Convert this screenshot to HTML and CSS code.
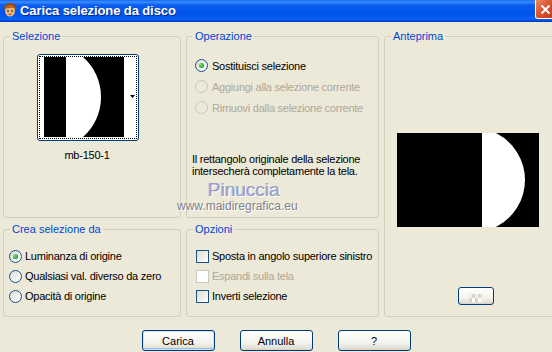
FILE: index.html
```html
<!DOCTYPE html>
<html lang="it">
<head>
  <meta charset="UTF-8">
  <meta name="viewport" content="width=device-width, initial-scale=1.0">
  <title>Carica selezione da disco</title>
  <link rel="stylesheet" href="styles.css">
</head>
<body>

  <div class="window">

    <!-- Title bar -->
    <div class="titlebar">
      <svg class="app-icon" width="16" height="16" viewBox="0 0 16 16">
        <path d="M2 6 Q3 1 8 1 Q13 1 14 6 L13 8 L3 8 Z" fill="#9A4A12"/>
        <ellipse cx="8" cy="9" rx="5" ry="5.5" fill="#F2B27A"/>
        <path d="M3 7 Q5 3 9 4 Q12 4 13 7 Q11 5 8 6 Q5 6 3 7 Z" fill="#C0601C"/>
        <circle cx="6" cy="9" r="1" fill="#2A6A2A"/>
        <circle cx="10" cy="9" r="1" fill="#2A6A2A"/>
        <path d="M6.5 12 Q8 13 9.5 12" stroke="#B0402A" stroke-width="1" fill="none"/>
      </svg>
      <span class="title">Carica selezione da disco</span>
      <span class="close-btn">
        <svg width="11" height="11" viewBox="0 0 11 11">
          <path d="M1.5 1.5 L9.5 9.5 M9.5 1.5 L1.5 9.5" stroke="#fff" stroke-width="2"/>
        </svg>
      </span>
    </div>

    <div class="dialog">
      <div class="groups">

        <!-- Selezione -->
        <fieldset class="group">
          <legend>Selezione</legend>
          <div class="thumb-wrap">
            <div class="thumb">
              <div class="thumb-focus">
                <svg width="80" height="80" viewBox="0 0 80 80">
                  <rect width="80" height="80" fill="#000"/>
                  <path d="M22 0 H39 A53.4 53.4 0 0 1 39 80 H22 Z" fill="#fff"/>
                </svg>
                <span class="thumb-side">
                  <svg width="5" height="3" viewBox="0 0 5 3"><path d="M0 0 H5 L2.5 3 Z" fill="#000"/></svg>
                </span>
              </div>
            </div>
            <div class="thumb-name">mb-150-1</div>
          </div>
        </fieldset>

        <!-- Operazione -->
        <fieldset class="group">
          <legend>Operazione</legend>
          <div class="option-list op-list">
            <label class="option"><span class="radio checked"></span>Sostituisci selezione</label>
            <label class="option disabled"><span class="radio"></span>Aggiungi alla selezione corrente</label>
            <label class="option disabled"><span class="radio"></span>Rimuovi dalla selezione corrente</label>
          </div>
          <p class="note">Il rettangolo originale della selezione<br>intersecherà completamente la tela.</p>
        </fieldset>

        <!-- Anteprima -->
        <fieldset class="group preview-group">
          <legend>Anteprima</legend>
          <svg class="preview" width="142" height="94" viewBox="0 0 142 94">
            <rect width="142" height="94" fill="#000"/>
            <path d="M85 0 H99 A52.6 52.6 0 0 1 99 94 H85 Z" fill="#fff"/>
          </svg>
          <span class="btn small-btn">
            <svg width="14" height="8" viewBox="0 0 14 8">
              <rect x="0" y="0" width="14" height="8" fill="#EFEFEA"/>
              <rect x="3" y="0" width="3" height="4" fill="#D8D6CC"/>
              <rect x="9" y="0" width="3" height="4" fill="#D8D6CC"/>
              <rect x="0" y="4" width="3" height="4" fill="#D8D6CC"/>
              <rect x="6" y="4" width="3" height="4" fill="#D8D6CC"/>
              <rect x="3" y="4" width="3" height="4" fill="#fff"/>
              <rect x="9" y="4" width="3" height="4" fill="#fff"/>
            </svg>
          </span>
        </fieldset>

        <!-- Crea selezione da -->
        <fieldset class="group">
          <legend>Crea selezione da</legend>
          <div class="option-list src-list">
            <label class="option"><span class="radio checked"></span>Luminanza di origine</label>
            <label class="option"><span class="radio"></span>Qualsiasi val. diverso da zero</label>
            <label class="option"><span class="radio"></span>Opacità di origine</label>
          </div>
        </fieldset>

        <!-- Opzioni -->
        <fieldset class="group">
          <legend>Opzioni</legend>
          <div class="option-list opt-list">
            <label class="option"><span class="check"></span>Sposta in angolo superiore sinistro</label>
            <label class="option disabled"><span class="check"></span>Espandi sulla tela</label>
            <label class="option"><span class="check"></span>Inverti selezione</label>
          </div>
        </fieldset>

      </div>

      <div class="buttons">
        <span class="btn dlg-btn default">Carica</span>
        <span class="btn dlg-btn">Annulla</span>
        <span class="btn dlg-btn">?</span>
      </div>
    </div>

    <!-- Watermark over the dialog -->
    <div class="watermark">
      <div class="wm-name">Pinuccia</div>
      <div class="wm-site">www.maidiregrafica.eu</div>
    </div>

  </div>

</body>
</html>
```

FILE: styles.css
```css
body {
  margin: 0;
  padding: 0;
  background: #ECE9D8;
  font-family: 'Liberation Sans', Arial, sans-serif;
  font-size: 11px;
  color: #000;
  overflow: hidden;
}

.window {
  position: relative;
  width: 552px;
  height: 352px;
  overflow: hidden;
}

/* Title bar */
.titlebar {
  height: 22px;
  display: flex;
  align-items: center;
  padding-left: 2px;
  background: linear-gradient(to bottom, #1466F2 0px, #3A8DFF 2px, #0C5DF0 5px, #0055E8 12px, #0058EE 16px, #0A63FF 19px, #0046D6 21px, #0038B8 22px);
}

.app-icon {
  margin-right: 2px;
  margin-top: -2px;
}

.title {
  color: #fff;
  font-weight: bold;
  font-size: 13px;
  letter-spacing: -0.1px;
  text-shadow: 1px 1px 0 #0A2A8E;
  margin-top: -2px;
}

.close-btn {
  margin-left: auto;
  margin-right: -4px;
  align-self: flex-start;
  width: 21px;
  height: 19px;
  box-sizing: border-box;
  border: 1px solid #fff;
  border-top: none;
  border-radius: 0 0 3px 3px;
  background: linear-gradient(135deg, #EE8A66, #D9532B 45%, #C23B16);
  display: flex;
  align-items: center;
  justify-content: center;
}

/* Dialog body */
.dialog {
  padding: 8px 0 0 3px;
}

.groups {
  display: grid;
  grid-template-columns: 178px 193px 185px;
  grid-template-rows: 188px 94px;
  column-gap: 5px;
  row-gap: 5px;
}

.group {
  margin: 0;
  padding: 0;
  min-width: 0;
  border: 1px solid #D0D0BF;
  border-radius: 3px;
}

.group legend {
  margin-left: 6px;
  padding: 0 2px;
  color: #0046D5;
  line-height: 13px;
}

.preview-group {
  grid-row: span 2;
}

/* Thumbnail */
.thumb-wrap {
  width: 102px;
  margin: 11px 0 0 33px;
  text-align: center;
}

.thumb {
  width: 102px;
  height: 87px;
  box-sizing: border-box;
  border: 1px solid #003C74;
  border-radius: 3px;
  background: #fff;
  padding: 1px;
}

.thumb-focus {
  height: 83px;
  box-sizing: border-box;
  border: 1px dotted #000;
  padding-left: 4px;
  display: flex;
}

.thumb-side {
  flex: 1;
  display: flex;
  align-items: center;
  justify-content: flex-end;
  padding-right: 1px;
  padding-bottom: 2px;
}

.thumb-name {
  margin-top: 8px;
  line-height: 13px;
  padding-right: 2px;
  letter-spacing: -0.25px;
}

/* Radio and check rows */
.option-list {
  display: flex;
  flex-direction: column;
}

.option {
  display: flex;
  align-items: center;
  height: 20px;
  white-space: nowrap;
  letter-spacing: -0.25px;
}

.op-list {
  padding: 12px 0 0 8px;
}

.op-list .option {
  height: 21px;
}

.src-list {
  padding: 10px 0 0 5px;
}

.opt-list {
  padding: 10px 0 0 9px;
}

.option.disabled {
  color: #ACA899;
}

.radio {
  position: relative;
  flex: none;
  width: 13px;
  height: 13px;
  box-sizing: border-box;
  border: 1px solid #1C5180;
  border-radius: 50%;
  background: linear-gradient(135deg, #DCDCD7, #FFFFFF);
  margin-right: 4px;
}

.src-list .radio {
  margin-right: 3px;
}

.radio.checked::after {
  content: "";
  position: absolute;
  left: 3px;
  top: 3px;
  width: 5px;
  height: 5px;
  border-radius: 50%;
  background: radial-gradient(circle at 35% 35%, #7BE07B, #21A121 70%);
}

.disabled .radio {
  border-color: #CAC8BB;
  background: #ECE9D8;
}

.check {
  flex: none;
  width: 13px;
  height: 13px;
  box-sizing: border-box;
  border: 1px solid #1C5180;
  background: linear-gradient(135deg, #DCDCD7, #FFFFFF);
  margin-right: 3px;
}

.disabled .check {
  border-color: #CAC8BB;
  background: #fff;
}

.note {
  margin: 35px 0 0 5px;
  line-height: 12px;
  white-space: nowrap;
  letter-spacing: -0.25px;
}

/* Preview */
.preview {
  display: block;
  margin: 90px 0 0 12px;
}

.btn {
  box-sizing: border-box;
  border: 1px solid #003C74;
  border-radius: 3px;
  background: linear-gradient(to bottom, #FFFFFF, #F4F3EE 60%, #E3E0D6 90%, #D6D0C5);
  display: flex;
  align-items: center;
  justify-content: center;
}

.small-btn {
  width: 36px;
  height: 18px;
  margin: 60px 0 0 73px;
}

.small-btn svg {
  margin-top: 3px;
}

/* Bottom buttons */
.buttons {
  display: flex;
  justify-content: center;
  gap: 25px;
  margin-top: 13px;
  padding-right: 3px;
}

.dlg-btn {
  width: 73px;
  height: 21px;
}

.dlg-btn.default {
  box-shadow: inset 0 0 0 1px #CEE2FC, inset 0 -1px 0 1px #9DB9EB;
}

/* Watermark */
.watermark {
  position: absolute;
  left: 177px;
  top: 180px;
  pointer-events: none;
}

.wm-name {
  margin-left: 31px;
  font-size: 19px;
  line-height: 19px;
  color: #9A9EC6;
  text-shadow: 1px 1px 0 #fff, -1px 0 0 #B8BAD6;
}

.wm-site {
  margin-top: 1px;
  font-size: 12px;
  line-height: 12px;
  color: #80808E;
  text-shadow: 1px 1px 0 #fff;
}
```
